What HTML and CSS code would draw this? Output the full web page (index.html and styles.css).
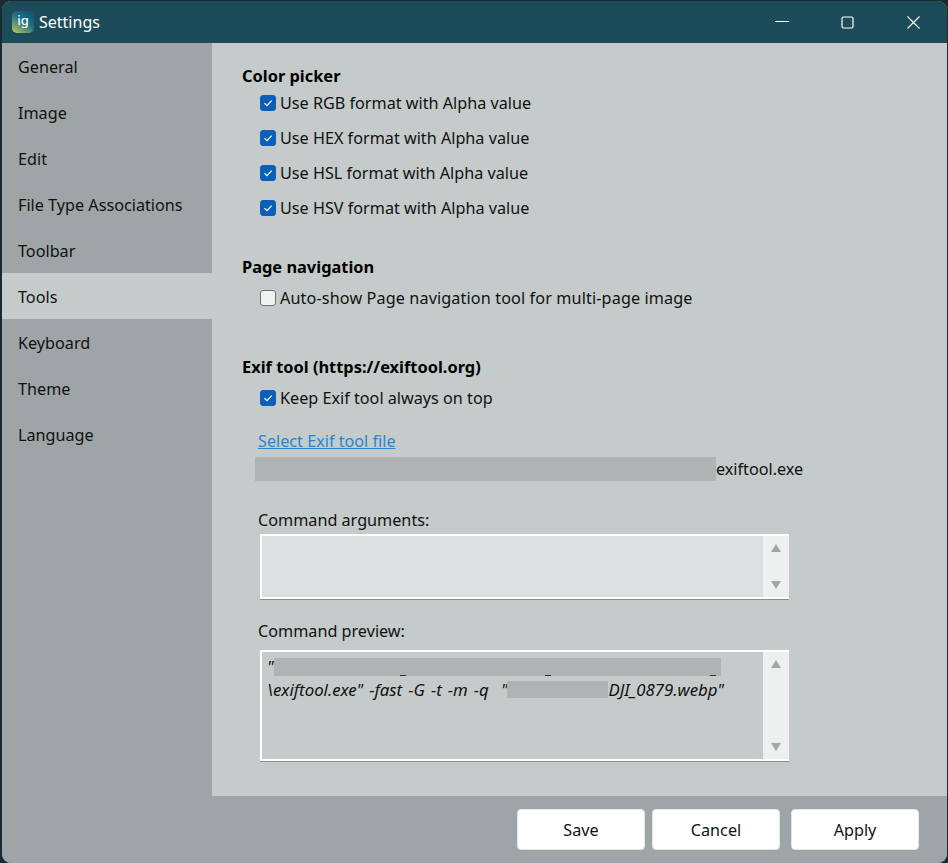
FILE: index.html
```html
<!DOCTYPE html>
<html lang="en">
<head>
<meta charset="utf-8">
<title>Settings</title>
<link rel="stylesheet" href="styles.css">
</head>
<body>
<div class="window">
  <header class="titlebar">
    <div class="app-icon"><span>ig</span></div>
    <div class="title">Settings</div>
    <div class="controls">
      <svg class="ctl ctl-min" width="14" height="14" viewBox="0 0 14 14"><path d="M0 6.5H14" stroke="#fff" stroke-width="1" fill="none"/></svg>
      <svg class="ctl ctl-max" width="13" height="13" viewBox="0 0 13 13"><rect x="1" y="1" width="11" height="11" rx="1.5" stroke="#fff" stroke-width="1.2" fill="none"/></svg>
      <svg class="ctl ctl-close" width="13" height="13" viewBox="0 0 13 13"><path d="M.5.5L12.5 12.5M12.5.5L.5 12.5" stroke="#fff" stroke-width="1.1" fill="none"/></svg>
    </div>
  </header>
  <div class="middle">
    <nav class="sidebar">
      <div class="nav-item">General</div>
      <div class="nav-item">Image</div>
      <div class="nav-item">Edit</div>
      <div class="nav-item">File Type Associations</div>
      <div class="nav-item">Toolbar</div>
      <div class="nav-item active">Tools</div>
      <div class="nav-item">Keyboard</div>
      <div class="nav-item">Theme</div>
      <div class="nav-item">Language</div>
    </nav>
    <main class="content">
      <h2 class="heading first">Color picker</h2>
      <label class="row"><span class="box on"><svg width="10" height="10" viewBox="0 0 10 10"><path d="M1.5 5.2L4 7.6L8.6 2.6" stroke="#fff" stroke-width="1.2" fill="none"/></svg></span><span>Use RGB format with Alpha value</span></label>
      <label class="row"><span class="box on"><svg width="10" height="10" viewBox="0 0 10 10"><path d="M1.5 5.2L4 7.6L8.6 2.6" stroke="#fff" stroke-width="1.2" fill="none"/></svg></span><span>Use HEX format with Alpha value</span></label>
      <label class="row"><span class="box on"><svg width="10" height="10" viewBox="0 0 10 10"><path d="M1.5 5.2L4 7.6L8.6 2.6" stroke="#fff" stroke-width="1.2" fill="none"/></svg></span><span>Use HSL format with Alpha value</span></label>
      <label class="row"><span class="box on"><svg width="10" height="10" viewBox="0 0 10 10"><path d="M1.5 5.2L4 7.6L8.6 2.6" stroke="#fff" stroke-width="1.2" fill="none"/></svg></span><span>Use HSV format with Alpha value</span></label>

      <h2 class="heading">Page navigation</h2>
      <label class="row"><span class="box"></span><span class="wide">Auto-show Page navigation tool for multi-page image</span></label>

      <h2 class="heading heading-exif">Exif tool (https://exiftool.org)</h2>
      <label class="row"><span class="box on"><svg width="10" height="10" viewBox="0 0 10 10"><path d="M1.5 5.2L4 7.6L8.6 2.6" stroke="#fff" stroke-width="1.2" fill="none"/></svg></span><span>Keep Exif tool always on top</span></label>

      <a class="link">Select Exif tool file</a>
      <div class="path"><span class="redact path-redact"></span><span>exiftool.exe</span></div>

      <div class="label">Command arguments:</div>
      <div class="field field-args">
        <div class="field-text"></div>
        <div class="scroll"><i class="arrow up"></i><i class="arrow down"></i></div>
      </div>

      <div class="label label-preview">Command preview:</div>
      <div class="field field-preview">
        <div class="field-text preview-text">
          <div class="pline"><span>"</span><span class="redact red-a"><i class="tick t1"></i><i class="tick t2"></i><i class="tick t3"></i></span></div>
          <div class="pline">\exiftool.exe" -fast -G -t -m -q&nbsp; "<span class="redact red-b"></span>DJI_0879.webp"</div>
        </div>
        <div class="scroll"><i class="arrow up"></i><i class="arrow down"></i></div>
      </div>
    </main>
  </div>
  <footer class="footer">
    <button class="btn">Save</button>
    <button class="btn">Cancel</button>
    <button class="btn btn-apply">Apply</button>
  </footer>
</div>
</body>
</html>
```
FILE: styles.css
```css
* { box-sizing: border-box; }
html, body { margin: 0; height: 100%; }
body {
  background: #1a2a30;
  font-family: "Noto Sans", "Open Sans", "Liberation Sans", sans-serif;
  font-size: 16.2px;
  color: #111;
  overflow: hidden;
}
.window {
  margin: 1px 1px 0 2px;
  height: 862px;
  border-radius: 9px;
  overflow: hidden;
  display: flex;
  flex-direction: column;
  background: #9fa4a6;
}
.titlebar {
  height: 42px;
  flex: none;
  background: #1c4c5a;
  display: flex;
  align-items: center;
  padding-left: 10px;
  color: #fff;
}
.app-icon {
  width: 22px;
  height: 22px;
  border-radius: 5px;
  background: linear-gradient(35deg, #e0c95a 0%, #7fa56a 22%, #1c6f86 55%, #0e4f6b 100%);
  display: flex;
  align-items: center;
  justify-content: center;
  color: #fff;
  font-size: 13px;
  font-weight: 500;
  line-height: 1;
  padding-bottom: 3px;
}
.title { margin-left: 5px; font-size: 16px; }
.controls { margin-left: auto; display: flex; align-items: center; }
.ctl { display: block; flex: none; }
.ctl-min { margin-right: 52px; }
.ctl-max { margin-right: 53px; }
.ctl-close { margin-right: 27px; }
.middle { flex: 1; display: flex; min-height: 0; }
.sidebar { width: 210px; flex: none; background: #9fa4a6; }
.nav-item {
  height: 46px;
  line-height: 48px;
  padding-left: 16px;
}
.nav-item.active { background: #c5cbca; }
.content {
  flex: 1;
  background: #c5cbca;
  padding: 21px 0 0 30px;
}
.heading {
  margin: 30px 0 0;
  font-size: 16.4px;
  font-weight: 700;
  line-height: 24px;
  color: #000;
}
.heading.first { margin-top: 0; }
.heading.first + .row { margin-top: -3px; }
.heading + .row { margin-top: 1px; }
.heading-exif { margin-top: 40px; }
.row {
  display: flex;
  align-items: center;
  height: 35px;
  padding-left: 18px;
  gap: 4px;
}
.wide { letter-spacing: 0.12px; }
.box {
  width: 16px;
  height: 16px;
  border-radius: 3px;
  border: 1px solid #6f7375;
  background: #f1f2f2;
  display: flex;
  align-items: center;
  justify-content: center;
}
.box.on { background: #0a5fb8; border-color: #0a5fb8; }
.box svg { display: block; }
.link {
  display: block;
  margin: 14px 0 0 16px;
  line-height: 24px;
  color: #2a86cf;
  text-decoration: underline;
}
.redact { display: inline-block; background: #aeb3b3; position: relative; }
.path {
  display: flex;
  align-items: center;
  margin: 4px 0 0 13px;
  height: 24px;
}
.path-redact { width: 461px; height: 24px; }
.label { margin: 27px 0 0 16px; line-height: 24px; }
.label-preview { margin-top: 20px; }
.field {
  margin: 2px 0 0 18px;
  width: 529px;
  display: flex;
  border-top: 2px solid #fff;
  border-left: 2px solid #fff;
  border-bottom: 2px solid #fff;
  box-shadow: 0 1px 0 #8a8e8f;
}
.field-args { height: 65px; }
.field-args .field-text { background: #dcdfe0; }
.field-preview { height: 111px; margin-top: 7px; }
.field-text { flex: 1; min-width: 0; }
.scroll {
  width: 26px;
  flex: none;
  background: #eeefef;
  display: flex;
  flex-direction: column;
  justify-content: space-between;
  align-items: center;
  padding: 8px 0;
}
.arrow { display: block; width: 0; height: 0; border-left: 5px solid transparent; border-right: 5px solid transparent; }
.arrow.up { border-bottom: 8px solid #a4a6a7; }
.arrow.down { border-top: 8px solid #a4a6a7; }
.preview-text { padding: 3px 0 0 5px; font-style: italic; font-size: 16.8px; word-spacing: 1.7px; }
.pline { height: 23px; line-height: 23px; display: flex; align-items: center; white-space: pre; }
.red-a { width: 447px; height: 18px; }
.red-b { width: 101px; height: 17px; }
.tick { position: absolute; top: 17px; width: 6px; height: 1px; background: #333; }
.t1 { left: 126px; }
.t2 { left: 271px; }
.t3 { left: 436px; }
.footer {
  height: 67px;
  flex: none;
  background: #9fa4a6;
  display: flex;
  justify-content: flex-end;
  align-items: flex-start;
  padding: 13px 28px 0 0;
  gap: 7px;
}
.btn {
  width: 128px;
  height: 41px;
  background: #fff;
  border: 1px solid #e4e5e5;
  border-radius: 4px;
  font: inherit;
  color: #111;
}
.btn-apply { margin-left: 4px; }
```
